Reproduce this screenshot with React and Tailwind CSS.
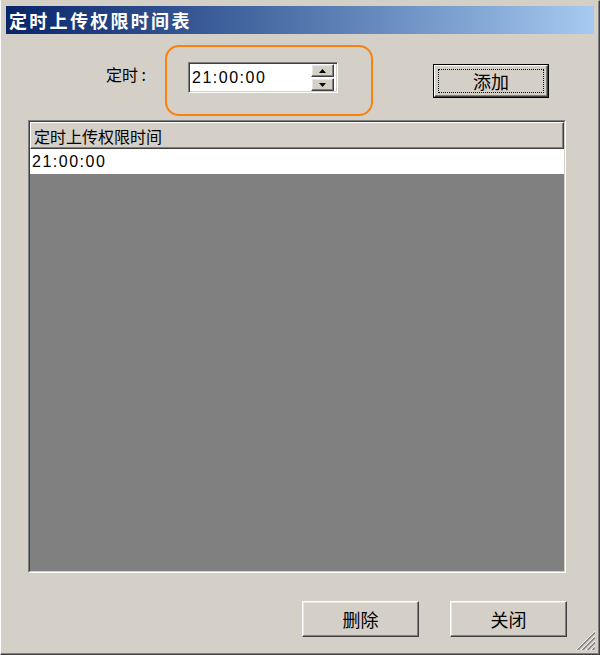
import { useState } from 'react';

const cjk = { fontFamily: '"Noto Sans CJK SC", "Liberation Sans", sans-serif' };
const latin = { fontFamily: '"Liberation Sans", "Noto Sans CJK SC", sans-serif' };

const raised =
    'bg-[#d4d0c8] border border-t-white border-l-white border-r-[#404040] border-b-[#404040] shadow-[inset_-1px_-1px_0_#808080,inset_1px_1px_0_#e8e6e1]';

const Spin = ({ up }) => (
    <div className={`w-[23px] h-[13px] flex items-center justify-center ${raised}`}>
        <svg width="7" height="4" viewBox="0 0 7 4">
            {up ? <path d="M3.5 0 L7 4 L0 4 Z" fill="#000" /> : <path d="M0 0 L7 0 L3.5 4 Z" fill="#000" />}
        </svg>
    </div>
);

const Button = ({ children, className = '' }) => (
    <button className={`w-[117px] h-[36px] flex items-center justify-center text-[18px] text-black ${raised} ${className}`} style={cjk}>
        {children}
    </button>
);

const App = () => {
    const [time] = useState('21:00:00');
    const [rows] = useState(['21:00:00']);

    return (
        <div className="w-[600px] h-[655px] bg-[#d4d0c8] border border-t-[#d4d0c8] border-l-white border-r-[#404040] border-b-[#404040] shadow-[inset_-1px_-1px_0_#808080] flex flex-col p-[5px] relative overflow-hidden">
            {/* title bar */}
            <div className="h-[28px] shrink-0 bg-gradient-to-r from-[#0a246a] to-[#a6caf0] flex items-center pl-[3px]">
                <span className="text-white font-bold text-[18px] tracking-[2.3px] leading-none" style={cjk}>定时上传权限时间表</span>
            </div>

            {/* top row */}
            <div className="h-[86px] shrink-0 relative flex items-start">
                <div className="absolute left-[159px] top-[11px] w-[208px] h-[71px] rounded-[14px] border-2 border-[#f7820f]" />
                <div className="ml-[100px] mt-[30px] w-[82px] text-[16px] leading-[20px] text-black" style={cjk}>定时 :</div>
                <div className="mt-[28px] w-[150px] h-[31px] bg-white border border-t-[#808080] border-l-[#808080] border-r-white border-b-white shadow-[inset_1px_1px_0_#404040,inset_-1px_-1px_0_#d4d0c8] flex items-center pl-[3px] pr-[3px]">
                    <span className="flex-1 text-[16px] tracking-[1.5px] text-black" style={latin}>{time}</span>
                    <div className="flex flex-col gap-[1px]">
                        <Spin up />
                        <Spin />
                    </div>
                </div>
                <div className="ml-[95px] mt-[30px] w-[116px] h-[34px] border border-black">
                    <div className="w-full h-full border border-t-white border-l-white border-r-[#404040] border-b-[#404040] shadow-[inset_-1px_-1px_0_#808080] bg-[#d4d0c8] p-[3px]">
                        <div className="w-full h-full border border-dotted border-black flex items-center justify-center text-[18px] leading-none pb-[1px] text-black" style={cjk}>添加</div>
                    </div>
                </div>
            </div>

            {/* list */}
            <div className="ml-[22px] w-[538px] h-[453px] shrink-0 border border-t-[#808080] border-l-[#808080] border-r-white border-b-white">
                <div className="w-full h-full border border-t-[#404040] border-l-[#404040] border-r-[#d4d0c8] border-b-[#d4d0c8] bg-[#808080] flex flex-col">
                    <div className="h-[27px] shrink-0 bg-[#d4d0c8] border border-t-white border-l-white border-r-[#404040] border-b-[#404040] shadow-[inset_-1px_-1px_0_#808080] flex items-center pl-[3px]">
                        <span className="text-[16px] text-black leading-none" style={cjk}>定时上传权限时间</span>
                    </div>
                    {rows.map((r) => (
                        <div key={r} className="h-[25px] shrink-0 bg-white flex items-center pl-[2px]">
                            <span className="text-[16px] tracking-[1.5px] text-black" style={latin}>{r}</span>
                        </div>
                    ))}
                </div>
            </div>

            {/* bottom buttons */}
            <div className="mt-[28px] flex justify-end gap-[31px] pr-[27px]">
                <Button>删除</Button>
                <Button>关闭</Button>
            </div>

            {/* resize grip */}
            <svg className="absolute right-[4px] bottom-[4px]" width="20" height="20" viewBox="0 0 20 20">
                {[1, 6, 11, 16].map((o) => (
                    <g key={o}>
                        <line x1={20} y1={o} x2={o} y2={20} stroke="#ffffff" strokeWidth="1" />
                        <line x1={20} y1={o + 1.5} x2={o + 1.5} y2={20} stroke="#808080" strokeWidth="1.5" />
                    </g>
                ))}
            </svg>
        </div>
    );
};

export default App;
